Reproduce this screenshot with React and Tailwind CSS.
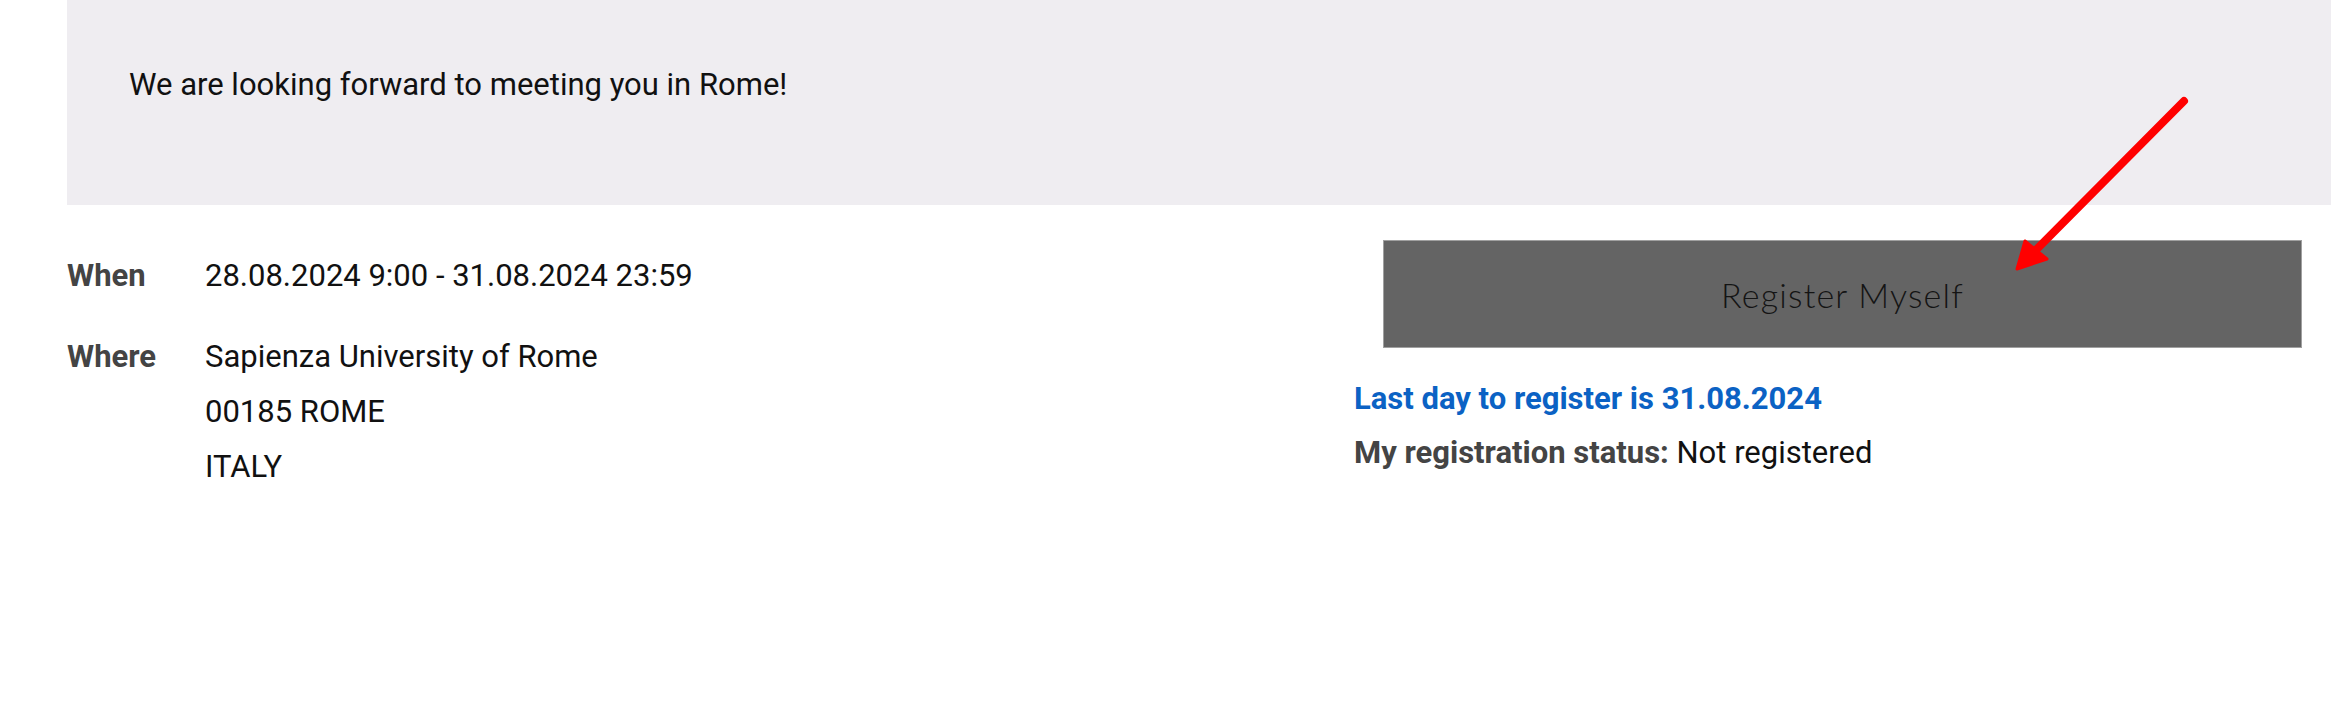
import React from 'react';

const EventDetails = () => {
  return (
    <div className="relative w-[2331px] h-[710px] bg-white overflow-hidden font-['Roboto',sans-serif]">
      {/* Intro panel */}
      <div className="ml-[67px] h-[205px] bg-[#efedf1] pt-[64px] pl-[62px]">
        <p className="text-[31px] leading-[42px] text-[#111]">We are looking forward to meeting you in Rome!</p>
      </div>

      <div className="flex pl-[67px]">
        {/* When / Where */}
        <div className="w-[1287px] pt-[43px]">
          <div className="flex">
            <div className="w-[138px] text-[31px] leading-[55px] font-bold text-[#444]">When</div>
            <div className="text-[31px] leading-[55px] text-[#111]">28.08.2024 9:00 - 31.08.2024 23:59</div>
          </div>
          <div className="flex mt-[26px]">
            <div className="w-[138px] text-[31px] leading-[55px] font-bold text-[#444]">Where</div>
            <div className="text-[31px] leading-[55px] text-[#111]">
              <div>Sapienza University of Rome</div>
              <div>00185 ROME</div>
              <div>ITALY</div>
            </div>
          </div>
        </div>

        {/* Registration */}
        <div className="flex-1 pt-[35px]">
          <button className="ml-[29px] w-[919px] h-[108px] bg-[#646464] border border-[#a0a0a0] text-[34px] font-light text-[#141414] font-['Lato',sans-serif] tracking-[1.2px]">
            Register Myself
          </button>
          <p className="mt-[31px] text-[31px] leading-[40px] font-bold text-[#0b62c4]">Last day to register is 31.08.2024</p>
          <p className="mt-[14px] text-[31px] leading-[40px] text-[#111]">
            <span className="font-bold text-[#444]">My registration status:</span> Not registered
          </p>
        </div>
      </div>

      {/* Annotation arrow */}
      <svg className="absolute left-0 top-0 pointer-events-none" width="2331" height="710">
        <line x1="2184" y1="101" x2="2030" y2="256" stroke="#ff0000" strokeWidth="8" strokeLinecap="round" />
        <polygon points="2017,269 2025,241 2047,259" fill="#ff0000" stroke="#ff0000" strokeWidth="3" strokeLinejoin="round" />
      </svg>
    </div>
  );
};

export default function App() {
  return <EventDetails />;
}
